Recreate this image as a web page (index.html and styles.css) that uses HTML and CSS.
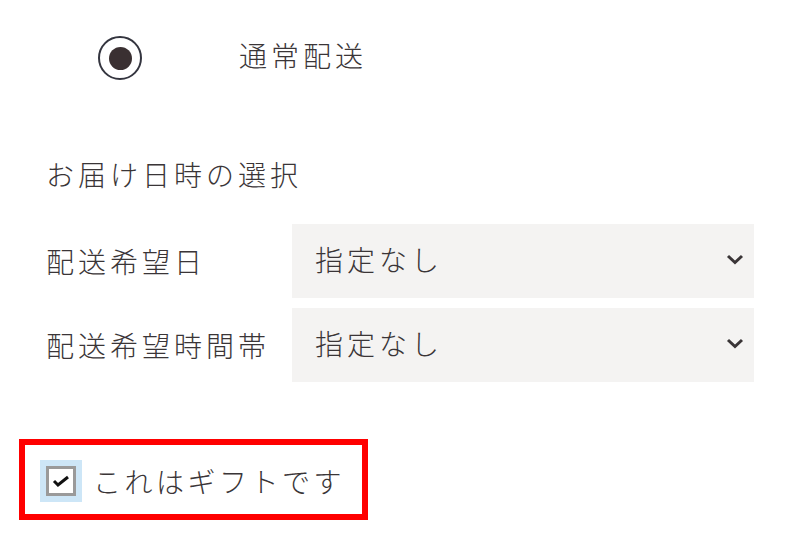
FILE: index.html
```html
<!DOCTYPE html>
<html>
<head>
<link rel="stylesheet" href="styles.css">
</head>
<body>

<div class="method">
    <span class="radio"><span class="radio-dot"></span></span>
    <span class="method-label">通常配送</span>
</div>

<p class="heading">お届け日時の選択</p>

<div class="rows">
    <div class="row-label">配送希望日</div>
    <div class="select">
        <span class="select-text">指定なし</span>
        <svg class="chevron" width="18" height="11" viewBox="0 0 18 11">
            <polyline points="2,2 9,8.5 16,2" fill="none" stroke="#3a3537" stroke-width="3"/>
        </svg>
    </div>

    <div class="row-label">配送希望時間帯</div>
    <div class="select">
        <span class="select-text">指定なし</span>
        <svg class="chevron" width="18" height="11" viewBox="0 0 18 11">
            <polyline points="2,2 9,8.5 16,2" fill="none" stroke="#3a3537" stroke-width="3"/>
        </svg>
    </div>
</div>

<div class="gift">
    <span class="check-focus">
        <span class="check-box">
            <svg width="18" height="14" viewBox="0 0 18 14">
                <polyline points="2,7 6,11 16,3" fill="none" stroke="#111" stroke-width="3"/>
            </svg>
        </span>
    </span>
    <span class="gift-label">これはギフトです</span>
</div>

</body>
</html>
```

FILE: styles.css
```css
body {
    margin: 0;
    padding: 0;
    font-family: "Noto Sans CJK JP", sans-serif;
    font-weight: 300;
    font-size: 28px;
    letter-spacing: 4px;
    color: #3a3537;
    background-color: white;
}

.method {
    display: flex;
    align-items: center;
    height: 116px;
    padding-left: 98px;
}

.radio {
    width: 44px;
    height: 44px;
    box-sizing: border-box;
    border: 2px solid #34353f;
    border-radius: 50%;
    display: flex;
    justify-content: center;
    align-items: center;
}

.radio-dot {
    width: 23px;
    height: 23px;
    border-radius: 50%;
    background-color: #3a3032;
}

.method-label {
    margin-left: 97px;
    line-height: 40px;
    padding-bottom: 7px;
}

.heading {
    margin: 38px 0 0 46px;
    line-height: 40px;
}

.rows {
    display: grid;
    grid-template-columns: 246px 462px;
    grid-auto-rows: 74px;
    row-gap: 10px;
    margin: 30px 0 0 46px;
}

.row-label {
    display: flex;
    align-items: center;
    line-height: 40px;
}

.select {
    display: flex;
    justify-content: space-between;
    align-items: center;
    background-color: #f4f3f2;
    padding: 0 10px 0 23px;
}

.select-text {
    line-height: 40px;
    padding-bottom: 5px;
}

.chevron {
    margin-bottom: 3px;
}

.gift {
    display: inline-flex;
    align-items: center;
    margin: 57px 0 0 19px;
    border: 6px solid #ff0000;
    padding: 15px 17px 12px 15px;
}

.check-focus {
    width: 42px;
    height: 42px;
    background-color: #cde6f7;
    display: flex;
    justify-content: center;
    align-items: center;
}

.check-box {
    width: 30px;
    height: 30px;
    box-sizing: border-box;
    border: 3px solid #9a9a9a;
    background-color: white;
    display: flex;
    justify-content: center;
    align-items: center;
}

.gift-label {
    margin-left: 11px;
    line-height: 40px;
    letter-spacing: 3.5px;
}
```
